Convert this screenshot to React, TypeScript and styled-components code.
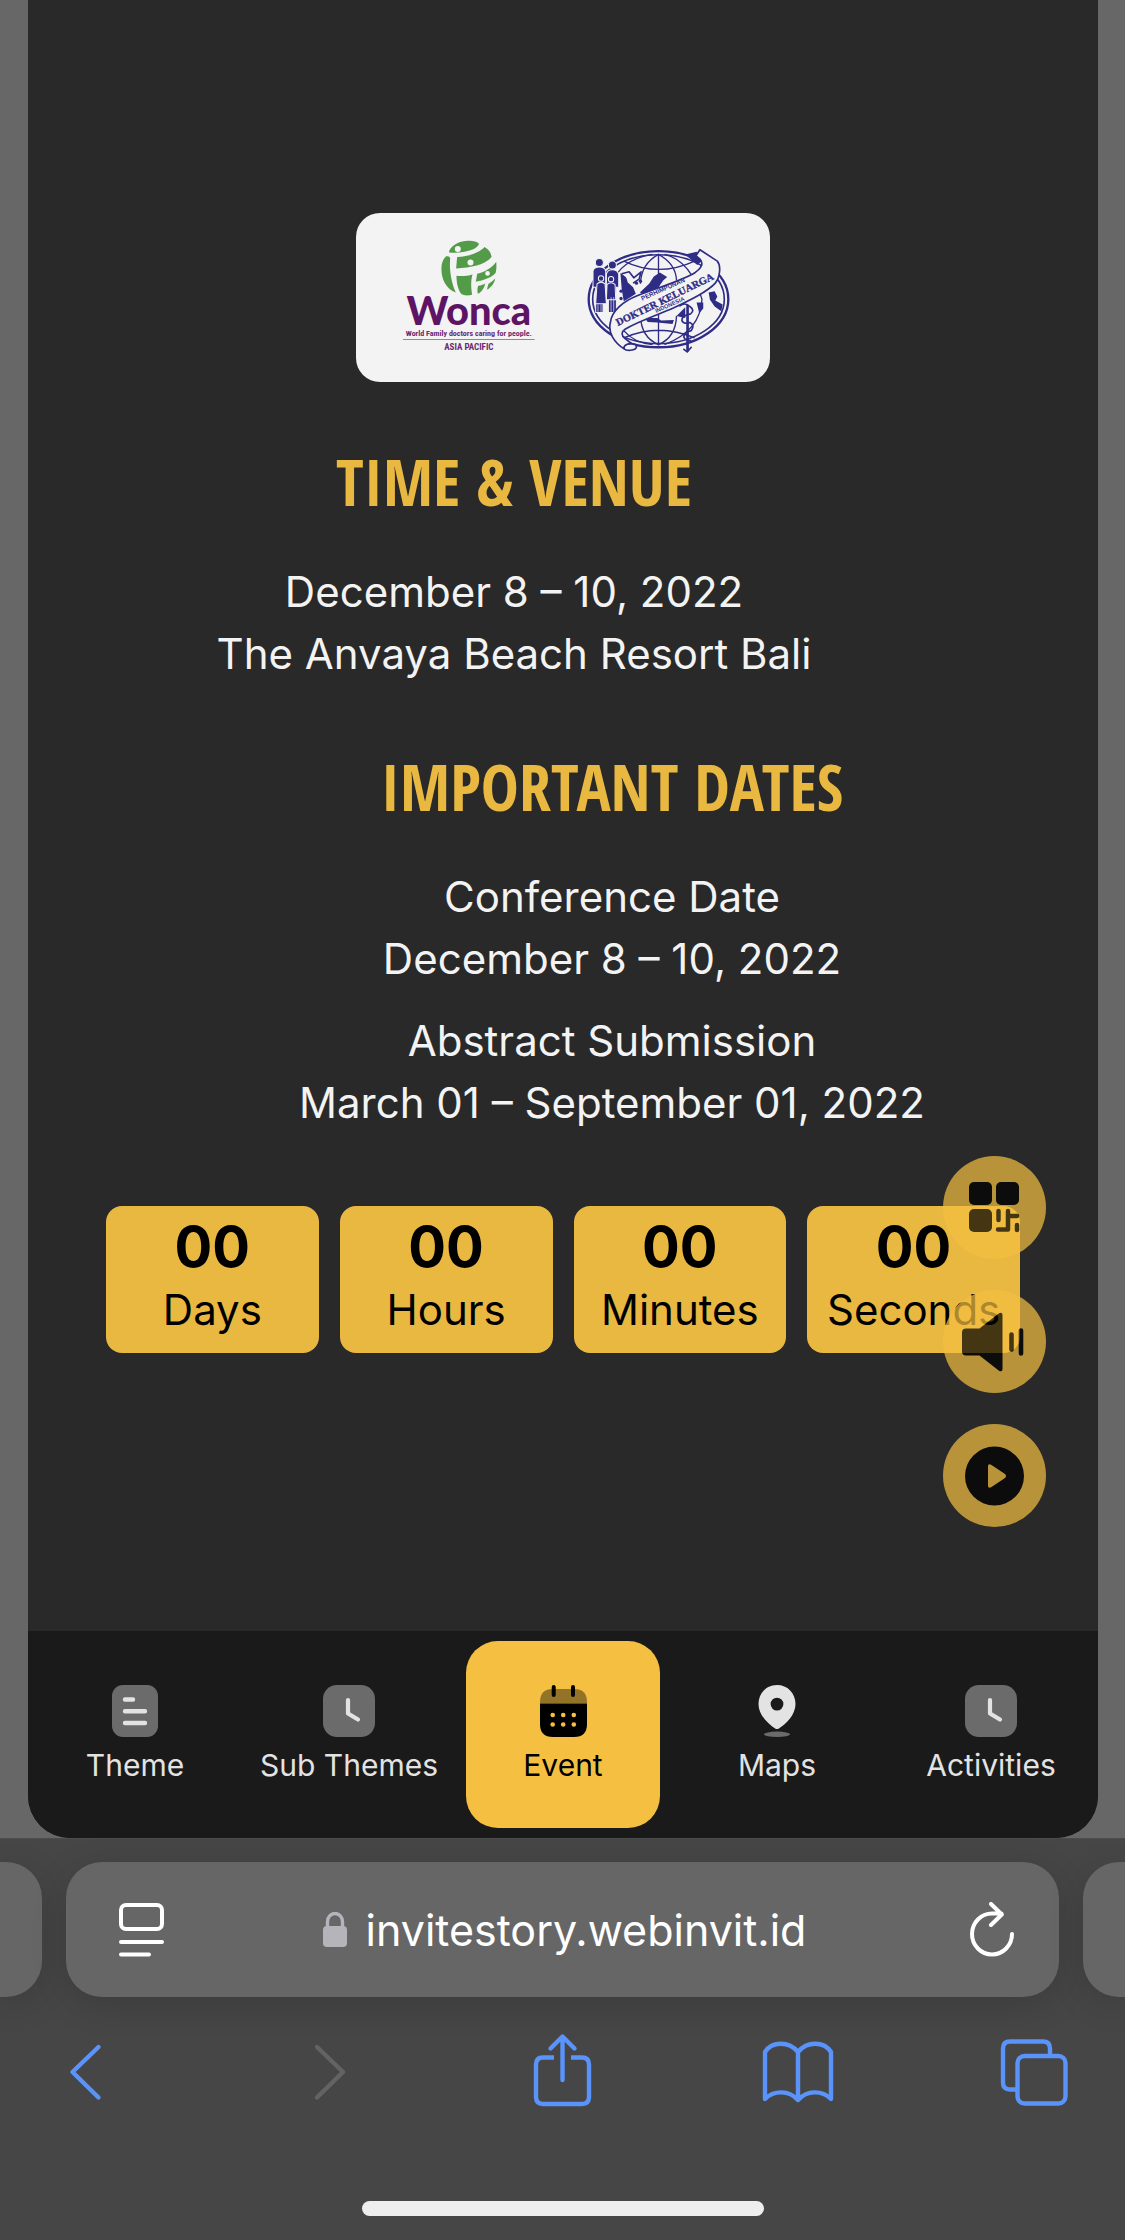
import React from "react";
import styled, { createGlobalStyle } from "styled-components";

const GlobalStyle = createGlobalStyle`
  * { box-sizing: border-box; }
  body {
    margin: 0;
    background: #464646;
    font-family: Inter, "Liberation Sans", sans-serif;
    -webkit-font-smoothing: antialiased;
  }
  button { border: 0; padding: 0; background: none; font: inherit; color: inherit; cursor: pointer; }
  svg { display: block; flex: none; }
  h2, p { margin: 0; }
`;

const Viewport = styled.div`
  background: #676767;
  padding: 0 27px 0 28px;
`;

const Card = styled.div`
  background: #292929;
  border-radius: 0 0 42px 42px;
  overflow: hidden;
`;

const Main = styled.main`
  position: relative;
  padding: 213px 78px 278px;
  display: flex;
  flex-direction: column;
`;

const Logos = styled.div`
  align-self: center;
  display: flex;
  align-items: center;
  justify-content: center;
  gap: 48px;
  padding: 26px 38px 26px 44px;
  margin-bottom: 64px;
  background: #f3f3f3;
  border-radius: 24px;
`;

const Section = styled.section<{ $shift: "left" | "right" }>`
  display: flex;
  flex-direction: column;
  text-align: center;
  padding-left: ${(p) => (p.$shift === "right" ? "98px" : "0")};
  padding-right: ${(p) => (p.$shift === "left" ? "98px" : "0")};
  margin-bottom: ${(p) => (p.$shift === "left" ? "66px" : "72px")};
`;

const Heading = styled.h2`
  font-family: "Open Sans Condensed", "Open Sans", sans-serif;
  font-weight: 700;
  font-size: 64px;
  line-height: 72px;
  color: #e9b840;
  margin-bottom: 43px;
`;

const Text = styled.p`
  font-size: 42px;
  line-height: 62px;
  color: #f3f3f3;
  & + & { margin-top: 20px; }
`;

const Countdown = styled.div`
  display: grid;
  grid-template-columns: repeat(4, 1fr);
  gap: 21px;
`;

const TimeBox = styled.div`
  display: flex;
  flex-direction: column;
  align-items: center;
  padding: 10px 0 12px;
  border-radius: 16px;
  background: #e9b840;
  color: #000;
`;

const TimeValue = styled.span`
  font-size: 56px;
  font-weight: 700;
  line-height: 63px;
`;

const TimeLabel = styled.span`
  font-size: 42px;
  line-height: 62px;
`;

const Floating = styled.div`
  position: absolute;
  right: 52px;
  bottom: 104px;
  display: flex;
  flex-direction: column;
  gap: 31px;
`;

const RoundButton = styled.button`
  width: 103px;
  height: 103px;
  border-radius: 50%;
  background: #f5c042;
  opacity: 0.7;
  display: flex;
  align-items: center;
  justify-content: center;
`;

const TabBar = styled.nav`
  display: grid;
  grid-template-columns: repeat(5, 1fr);
  gap: 20px;
  padding: 10px;
  background: #1a1a1a;
`;

const TabLink = styled.a<{ $active?: boolean }>`
  display: flex;
  flex-direction: column;
  align-items: center;
  gap: 9px;
  padding: 44px 0;
  border-radius: 32px;
  text-decoration: none;
  white-space: nowrap;
  font-size: 30px;
  line-height: 38px;
  color: ${(p) => (p.$active ? "#000" : "#e3e3e3")};
  background: ${(p) => (p.$active ? "#f5c042" : "transparent")};
`;

const Browser = styled.footer`
  background: #464646;
  border-top: 1px solid #4c4c4c;
  padding: 23px 0 24px;
  overflow: hidden;
`;

const AddressRow = styled.div`
  display: flex;
  gap: 24px;
`;

const SideTab = styled.div<{ $side: "left" | "right" }>`
  width: 42px;
  background: #666;
  border-radius: ${(p) => (p.$side === "left" ? "0 36px 36px 0" : "36px 0 0 36px")};
  box-shadow: 0 8px 36px rgba(0, 0, 0, 0.14);
`;

const AddressBar = styled.div`
  flex: 1;
  height: 135px;
  display: flex;
  align-items: center;
  justify-content: space-between;
  padding: 0 44px 0 53px;
  border-radius: 36px;
  background: #666;
  color: #fff;
  box-shadow: 0 8px 36px rgba(0, 0, 0, 0.14);
`;

const Address = styled.button`
  display: flex;
  align-items: center;
  gap: 18px;
  padding-right: 6px;
  font-size: 43px;
  line-height: 54px;
`;

const Toolbar = styled.div`
  display: flex;
  justify-content: space-between;
  padding: 34px 48px 90px;
  color: #5a93fa;
`;

const ToolButton = styled.button`
  &:disabled { color: #636363; }
`;

const HomeIndicator = styled.div`
  width: 402px;
  height: 15px;
  margin: 0 auto;
  border-radius: 8px;
  background: #eee;
`;

const WoncaLogo = () => (
  <svg width="137" height="117" viewBox="29 26 410 350" role="img" aria-label="Wonca Asia Pacific">
    <g fill="#549b49">
      <path d="M176 62C186 38 220 27 245 32C258 34 266 38 265 42C258 60 215 70 176 66Z" />
      <path d="M200 80C236 78 268 66 282 50C294 56 302 68 303 80C284 104 240 112 197 114Z" />
      <path d="M166 78C174 76 180 78 179 86C176 122 184 160 196 186C168 176 152 148 153 112C153 98 158 86 166 78Z" />
      <path d="M198 136C214 138 232 136 246 132C240 152 242 176 245 192C236 196 220 196 212 190C202 176 198 156 198 136Z" />
      <path d="M260 130C284 124 304 112 317 94C318 108 318 118 315 128C302 142 280 150 256 154Z" />
      <path d="M263 166C272 164 280 162 284 158C282 170 276 182 262 190C260 184 260 174 263 166Z" />
      <path d="M294 160C300 156 308 150 314 144C312 158 302 170 290 178C290 172 292 166 294 160Z" />
    </g>
    <g fill="#f3f3f3">
      <circle cx="202" cy="56" r="9" />
      <circle cx="240" cy="96" r="9" />
      <circle cx="291" cy="129" r="7" />
    </g>
    <text x="235" y="284" textAnchor="middle" fontFamily="Lato, sans-serif" fontWeight="900" fontSize="119" fill="#5d1464">Wonca</text>
    <text x="235" y="316" textAnchor="middle" fontFamily="Roboto Condensed, Roboto, sans-serif" fontWeight="700" fontSize="24" fill="#6a2a72">World Family doctors caring for people.</text>
    <path d="M38 327H432" stroke="#a678ac" strokeWidth="3" />
    <text x="235" y="357" textAnchor="middle" fontFamily="Roboto Condensed, Roboto, sans-serif" fontWeight="700" fontSize="27" fill="#6a2a72">ASIA PACIFIC</text>
  </svg>
);

const DoctorsLogo = () => (
  <svg width="147" height="117" viewBox="584 26 440 350" role="img" aria-label="Perhimpunan Dokter Keluarga Indonesia">
    <g fill="none" stroke="#2f2c86">
      <ellipse cx="804" cy="206" rx="209" ry="144" strokeWidth="7" />
      <ellipse cx="804" cy="206" rx="197" ry="133" strokeWidth="5" />
      <g strokeWidth="4">
        <path d="M804 70V345M700 92Q804 142 912 92M700 322Q804 276 912 322" />
        <path d="M804 72Q752 100 750 160M804 72Q856 100 858 150M750 256Q752 320 804 342M858 256Q856 320 804 342" />
        <path d="M786 72Q690 88 664 160M822 72Q900 90 934 206Q930 300 822 342M700 300Q730 336 786 342" />
      </g>
    </g>
    <g fill="#2f2c86">
      <path d="M690 128L706 136L712 156L728 170L736 190L720 200L700 212L694 176Z" />
      <path d="M748 186L776 160L790 138L808 126L830 140L818 150L800 176L766 192Z" />
      <path d="M762 262L800 262L812 270L850 268L846 280L800 276L772 274Z" />
      <path d="M954 186L972 182L980 198L974 210L996 222L992 242L972 228L958 208Z" />
      <path d="M884 72L918 64L934 92L920 104Z" />
      <circle cx="738" cy="158" r="5" /><circle cx="750" cy="152" r="5" />
      <circle cx="692" cy="182" r="5" /><circle cx="692" cy="204" r="5" />
      <path d="M918 216H938V234L926 248ZM858 256L884 230V262Z" />
    </g>
    <path d="M694 130L716 124L730 142L752 124L746 146L728 158" fill="#f3f3f3" stroke="#2f2c86" strokeWidth="5" strokeLinejoin="round" />
    <g fill="#2f2c86" stroke="#f3f3f3" strokeWidth="3">
      <circle cx="627" cy="96" r="12" />
      <path d="M608 122Q610 110 627 110Q644 110 646 122V170H638V246H616V170H608Z" />
      <circle cx="666" cy="104" r="12" />
      <path d="M648 132Q650 118 666 118Q682 118 685 132V170H678V246H654V170H648Z" />
      <circle cx="632" cy="144" r="8" />
      <path d="M620 160Q632 150 644 160L648 220H616Z" />
      <circle cx="662" cy="146" r="8" />
      <path d="M650 162Q662 152 674 162L676 208H648Z" />
    </g>
    <path d="M623 222V244M632 222V244M662 200V244M670 200V244" stroke="#f3f3f3" strokeWidth="2" />
    <g fill="#f3f3f3" stroke="#2f2c86" strokeWidth="5" strokeLinejoin="round">
      <path d="M700 352C700 338 736 336 738 348C738 362 704 362 700 352Z" />
      <path d="M928 58L980 92C992 106 988 140 974 158C950 184 900 208 850 232C800 254 744 272 704 296C692 304 692 314 704 324L722 338C706 340 700 346 700 354C672 336 652 306 660 276C664 240 700 212 740 196C800 172 876 150 914 126C936 110 938 98 928 86L916 76Z" />
    </g>
    <g fill="#2f2c86" textAnchor="middle">
      <text transform="translate(820 182) rotate(-24)" fontFamily="Liberation Sans, sans-serif" fontWeight="700" fontSize="19">PERHIMPUNAN</text>
      <text transform="translate(827 216) rotate(-26)" fontFamily="Liberation Serif, serif" fontWeight="700" fontSize="31" stroke="#2f2c86">DOKTER KELUARGA</text>
      <text transform="translate(840 228) rotate(-24)" fontFamily="Liberation Sans, sans-serif" fontWeight="700" fontSize="17">INDONESIA</text>
    </g>
    <g fill="none" stroke="#2f2c86" strokeLinecap="round">
      <path d="M891 226V360" strokeWidth="8" />
      <path d="M868 226Q884 214 898 228Q914 240 900 250Q872 256 874 270Q880 282 898 276Q914 284 902 300Q878 306 880 320Q884 330 900 330M880 356L890 364L902 350" strokeWidth="5" />
    </g>
  </svg>
);

const QrIcon = () => (
  <svg width="52" height="52" viewBox="1 1 52 52" aria-hidden="true">
    <rect x="1" y="1" width="23" height="23" rx="5" />
    <rect x="28" y="1" width="23" height="23" rx="5" />
    <rect x="1" y="28" width="23" height="23" rx="5" />
    <path d="M30.500 30V39M40 30V48.500H30M41 35H49M49 44V49" fill="none" stroke="#000" strokeWidth="4.500" strokeLinecap="round" strokeLinejoin="round" />
  </svg>
);

const SpeakerIcon = () => (
  <svg width="66" height="60" viewBox="0 0 66 60" aria-hidden="true">
    <path d="M4 16.500H17.500L37 1.200Q40.500 -.4 40.500 3V57Q40.500 60.400 37 58.800L17.500 43.500H4Q0 43.500 0 39.500V20.500Q0 16.500 4 16.500Z" />
    <path d="M49.500 22.500V37.500M59 18.500V41.500" stroke="#000" strokeWidth="4.600" strokeLinecap="round" />
  </svg>
);

const PlayIcon = () => (
  <svg width="60" height="60" viewBox="0 0 60 60" aria-hidden="true">
    <path fillRule="evenodd" d="M29.500 .5A29.500 29.500 0 1 1 29.500 59.500A29.500 29.500 0 1 1 29.500 .5ZM26.500 19Q23 17 23 20.500V39.500Q23 43 26.500 41L40 32Q42 30 40 28Z" />
  </svg>
);

const ThemeIcon = () => (
  <svg width="46" height="52" viewBox="0 0 46 52" aria-hidden="true">
    <rect width="46" height="52" rx="11" fill="#6b6b6b" />
    <path d="M13 14.500H21M13 26.300H33M13 38H33" stroke="#e3e3e3" strokeWidth="4.400" strokeLinecap="round" />
  </svg>
);

const ClockIcon = () => (
  <svg width="52" height="52" viewBox="0 0 52 52" aria-hidden="true">
    <rect width="52" height="52" rx="14" fill="#6b6b6b" />
    <path d="M25 15V28.500L35 34.500" fill="none" stroke="#e3e3e3" strokeWidth="4.200" strokeLinecap="round" strokeLinejoin="round" />
  </svg>
);

const CalendarIcon = () => (
  <svg width="47" height="52" viewBox="0 0 47 52" aria-hidden="true">
    <path d="M0 18.500V17Q0 4 13 4H34Q47 4 47 17V18.500Z" opacity=".4" />
    <path d="M0 18.500H47V39Q47 52 34 52H13Q0 52 0 39Z" />
    <path d="M13.700 2V10M33 2V10" stroke="#000" strokeWidth="4" strokeLinecap="round" />
    <g fill="#f5c042">
      {[30, 39.5].map((cy) => [12.7, 23.2, 33.8].map((cx) => <circle key={`${cx}-${cy}`} cx={cx} cy={cy} r="2.300" />))}
    </g>
  </svg>
);

const PinIcon = () => (
  <svg width="40" height="52" viewBox="0 0 40 52" aria-hidden="true">
    <path fillRule="evenodd" fill="#e3e3e3" d="M20 0C30.500 0 38.500 8 38.500 19C38.500 30 29 39 21.500 43.700Q20 44.500 18.500 43.700C11 39 1.500 30 1.500 19C1.500 8 9.500 0 20 0ZM20 12.700A6.400 6.400 0 1 0 20 25.500A6.400 6.400 0 1 0 20 12.700Z" />
    <ellipse cx="20" cy="49.300" rx="13" ry="2.700" fill="#6b6b6b" />
  </svg>
);

const PageIcon = () => (
  <svg width="46" height="54" viewBox="0 0 46 54" fill="none" stroke="currentColor" strokeWidth="4" strokeLinecap="round" aria-hidden="true">
    <rect x="2" y="2" width="41" height="24" rx="5" />
    <path d="M2 39H43M2 51.500H30" />
  </svg>
);

const LockIcon = () => (
  <svg width="25" height="35" viewBox="0 0 25 35" aria-hidden="true">
    <rect x="0" y="14" width="24" height="21" rx="4" fill="#b5b4bb" />
    <path d="M4.500 15V9.500A7.500 8 0 0 1 19.500 9.500V15" fill="none" stroke="#b5b4bb" strokeWidth="3.400" />
  </svg>
);

const ReloadIcon = () => (
  <svg width="45" height="56" viewBox="0 2 45 56" fill="none" stroke="currentColor" strokeWidth="4" strokeLinecap="round" strokeLinejoin="round" aria-hidden="true">
    <path d="M42 34A20 20.500 0 1 1 22 13.500H31.500M21 4L31.800 14.500L21 25" />
  </svg>
);

const ToolIcon = ({ children }: { children: React.ReactNode }) => (
  <svg width="80" height="80" viewBox="1 0 80 80" fill="none" stroke="currentColor" strokeWidth="4.400" strokeLinecap="round" strokeLinejoin="round" aria-hidden="true">
    {children}
  </svg>
);

const timer = ["Days", "Hours", "Minutes", "Seconds"];

const tabs = [
  { label: "Theme", icon: <ThemeIcon /> },
  { label: "Sub Themes", icon: <ClockIcon /> },
  { label: "Event", icon: <CalendarIcon />, active: true },
  { label: "Maps", icon: <PinIcon /> },
  { label: "Activities", icon: <ClockIcon /> },
];

export default function App() {
  return (
    <>
      <GlobalStyle />
      <Viewport>
        <Card>
          <Main>
            <Logos>
              <WoncaLogo />
              <DoctorsLogo />
            </Logos>
            <Section $shift="left">
              <Heading>TIME &amp; VENUE</Heading>
              <Text>
                December 8 – 10, 2022
                <br />
                The Anvaya Beach Resort Bali
              </Text>
            </Section>
            <Section $shift="right">
              <Heading>IMPORTANT DATES</Heading>
              <Text>
                Conference Date
                <br />
                December 8 – 10, 2022
              </Text>
              <Text>
                Abstract Submission
                <br />
                March 01 – September 01, 2022
              </Text>
            </Section>
            <Countdown>
              {timer.map((unit) => (
                <TimeBox key={unit}>
                  <TimeValue>00</TimeValue>
                  <TimeLabel>{unit}</TimeLabel>
                </TimeBox>
              ))}
            </Countdown>
            <Floating>
              <RoundButton aria-label="QR code"><QrIcon /></RoundButton>
              <RoundButton aria-label="Sound"><SpeakerIcon /></RoundButton>
              <RoundButton aria-label="Play"><PlayIcon /></RoundButton>
            </Floating>
          </Main>
          <TabBar>
            {tabs.map((tab) => (
              <TabLink key={tab.label} href="#" $active={tab.active}>
                {tab.icon}
                {tab.label}
              </TabLink>
            ))}
          </TabBar>
        </Card>
      </Viewport>
      <Browser>
        <AddressRow>
          <SideTab $side="left" />
          <AddressBar>
            <button aria-label="Page menu"><PageIcon /></button>
            <Address>
              <LockIcon />
              invitestory.webinvit.id
            </Address>
            <button aria-label="Reload"><ReloadIcon /></button>
          </AddressBar>
          <SideTab $side="right" />
        </AddressRow>
        <Toolbar>
          <ToolButton aria-label="Back">
            <ToolIcon><path d="M51.500 16L25.500 41L51.500 66.500" /></ToolIcon>
          </ToolButton>
          <ToolButton aria-label="Forward" disabled>
            <ToolIcon><path d="M33 16L59 41L33 66.500" /></ToolIcon>
          </ToolButton>
          <ToolButton aria-label="Share">
            <ToolIcon>
              <path d="M32 26.500H21Q14 26.500 14 33.500V66Q14 73 21 73H60Q67 73 67 66V33.500Q67 26.500 60 26.500H49" strokeLinecap="butt" />
              <path d="M40.500 49V6M28.500 17.500L40.500 5.500L52.500 17.500" />
            </ToolIcon>
          </ToolButton>
          <ToolButton aria-label="Bookmarks">
            <ToolIcon>
              <path d="M39 21C30 10 13 10 6 21V68C15 59 30 59 39 69C48 59 63 59 72 68V21C65 10 48 10 39 21ZM39 21V69" />
            </ToolIcon>
          </ToolButton>
          <ToolButton aria-label="Tabs">
            <ToolIcon>
              <rect x="21.500" y="25" width="48" height="47.500" rx="7" />
              <path d="M21 58.500H14Q7 58.500 7 51.500V17.500Q7 10.500 14 10.500H47Q54 10.500 54 17.500V24.500" strokeLinecap="butt" />
            </ToolIcon>
          </ToolButton>
        </Toolbar>
        <HomeIndicator />
      </Browser>
    </>
  );
}
